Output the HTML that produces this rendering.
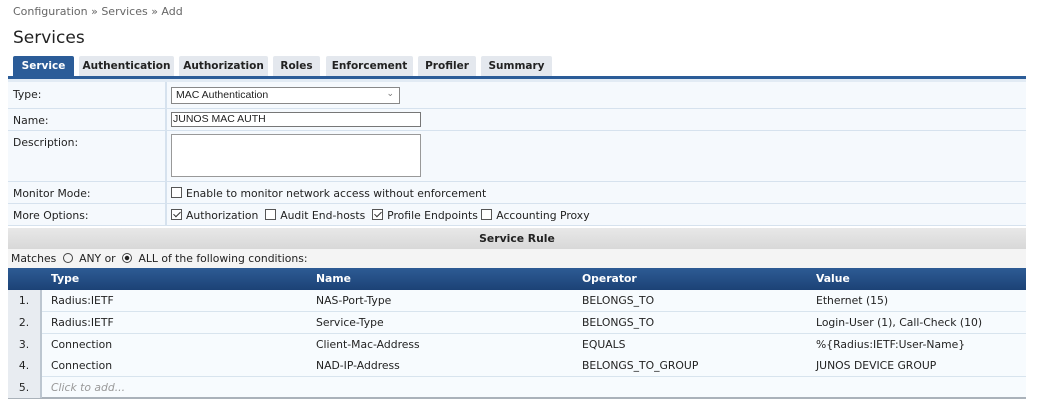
<!DOCTYPE html>
<html><head><meta charset="utf-8"><style>
*{margin:0;padding:0;box-sizing:border-box}
body{width:1041px;height:408px;background:#fff;font-family:"DejaVu Sans",Verdana,sans-serif;font-size:10.8px;color:#222;position:relative;overflow:hidden}
.a{position:absolute;white-space:nowrap}
.tab{position:absolute;top:56px;height:20px;background:#e4e8ee;font-weight:bold;font-size:10.5px;text-align:center;line-height:21px;color:#222;border-radius:2px 2px 0 0}
.row{position:absolute;left:8px;width:1018px;background:#f5f9fd;border-bottom:1px solid #d6e2ee}
.lab{position:absolute;left:0;top:0;bottom:0;width:159px;border-right:2px solid #d6e2ee;padding:6px 0 0 5px}
.cb{display:inline-block;width:11px;height:11px;border:1px solid #555;vertical-align:-1px;margin-right:4px;background:#fff;position:relative}
.cb.c::after{content:"";position:absolute;left:3px;top:0px;width:3px;height:6px;border:solid #333;border-width:0 1px 1px 0;transform:rotate(45deg)}
.dr{position:absolute;left:8px;width:1018px;height:22px;background:#f7fbfe;border-bottom:1px solid #d8e4ee;line-height:21px}
.dr .n{position:absolute;left:0;top:0;bottom:-1px;width:34px;background:#e8ecf1;border-right:2px solid #bcc6d0;text-align:center}
.dr span{position:absolute}
</style></head><body>
<div class="a" style="left:13px;top:5px;color:#666;font-size:11px">Configuration » Services » Add</div>
<div class="a" style="left:13px;top:28px;font-size:17px;color:#222">Services</div>
<div class="tab" style="left:13px;width:61px;background:#2b5c98;color:#fff">Service</div>
<div class="tab" style="left:79px;width:95px">Authentication</div>
<div class="tab" style="left:179px;width:89px">Authorization</div>
<div class="tab" style="left:273px;width:47px">Roles</div>
<div class="tab" style="left:326px;width:87px">Enforcement</div>
<div class="tab" style="left:418px;width:58px">Profiler</div>
<div class="tab" style="left:481px;width:71px">Summary</div>
<div class="a" style="left:8px;top:76px;width:1018px;height:3px;background:#2b5c98"></div>
<div class="a" style="left:8px;top:79px;width:1018px;height:3px;background:#e2ebf4"></div>

<div class="row" style="top:82px;height:27px"><div class="lab">Type:</div>
<div class="a" style="left:163px;top:5px;width:229px;height:17px;border:1px solid #888;background:#fff;padding:1px 4px;font-size:10.5px;font-family:'Liberation Sans',Arial,sans-serif">MAC Authentication<span style="position:absolute;right:5px;top:0;color:#777;font-size:9px">&#8964;</span></div></div>
<div class="row" style="top:109px;height:22px"><div class="lab" style="padding-top:5px">Name:</div>
<div class="a" style="left:163px;top:3px;width:250px;height:15px;border:1px solid #777;background:#fff;padding:0 1px;font-size:10.5px;font-family:'Liberation Sans',Arial,sans-serif">JUNOS MAC AUTH</div></div>
<div class="row" style="top:131px;height:51px"><div class="lab" style="padding-top:5px">Description:</div>
<div class="a" style="left:163px;top:3px;width:250px;height:43px;border:1px solid #999;background:#fff"></div></div>
<div class="row" style="top:182px;height:22px"><div class="lab" style="padding-top:5px">Monitor Mode:</div>
<div class="a" style="left:163px;top:5px"><span class="cb"></span>Enable to monitor network access without enforcement</div></div>
<div class="row" style="top:204px;height:22px"><div class="lab" style="padding-top:5px">More Options:</div>
<div class="a" style="left:163px;top:5px"><span class="cb c"></span>Authorization &nbsp;<span class="cb"></span>Audit End-hosts &nbsp;<span class="cb c"></span>Profile Endpoints <span class="cb"></span>Accounting Proxy</div></div>

<div class="a" style="left:8px;top:228px;width:1018px;height:21px;background:linear-gradient(#e8e8e8,#d8d8d8);text-align:center;font-weight:bold;line-height:22px">Service Rule</div>
<div class="a" style="left:8px;top:249px;width:1018px;height:19px;background:#f4f4f4;line-height:20px;padding-left:3px">Matches <span style="display:inline-block;width:10px;height:10px;border:1px solid #444;border-radius:50%;vertical-align:-1px;margin:0 3px"></span> ANY or <span style="display:inline-block;width:10px;height:10px;border:1px solid #444;border-radius:50%;vertical-align:-1px;margin:0 3px;background:radial-gradient(#222 35%,#fff 45%)"></span> ALL of the following conditions:</div>
<div class="a" style="left:8px;top:268px;width:1018px;height:22px;background:linear-gradient(#2d5b94,#1c4276);color:#fff;font-weight:bold;line-height:22px">
<span class="a" style="left:43px">Type</span><span class="a" style="left:308px">Name</span><span class="a" style="left:574px">Operator</span><span class="a" style="left:808px">Value</span></div>

<div class="dr" style="top:290px"><div class="n">1.</div><span style="left:43px">Radius:IETF</span><span style="left:308px">NAS-Port-Type</span><span style="left:574px">BELONGS_TO</span><span style="left:808px">Ethernet (15)</span></div>
<div class="dr" style="top:312px"><div class="n">2.</div><span style="left:43px">Radius:IETF</span><span style="left:308px">Service-Type</span><span style="left:574px">BELONGS_TO</span><span style="left:808px">Login-User (1), Call-Check (10)</span></div>
<div class="dr" style="top:334px"><div class="n">3.</div><span style="left:43px">Connection</span><span style="left:308px">Client-Mac-Address</span><span style="left:574px">EQUALS</span><span style="left:808px">%{Radius:IETF:User-Name}</span></div>
<div class="dr" style="top:355px"><div class="n">4.</div><span style="left:43px">Connection</span><span style="left:308px">NAD-IP-Address</span><span style="left:574px">BELONGS_TO_GROUP</span><span style="left:808px">JUNOS DEVICE GROUP</span></div>
<div class="dr" style="top:377px;border-bottom:2px solid #aab2ba"><div class="n">5.</div><span style="left:43px;color:#999;font-style:italic">Click to add...</span></div>
</body></html>
